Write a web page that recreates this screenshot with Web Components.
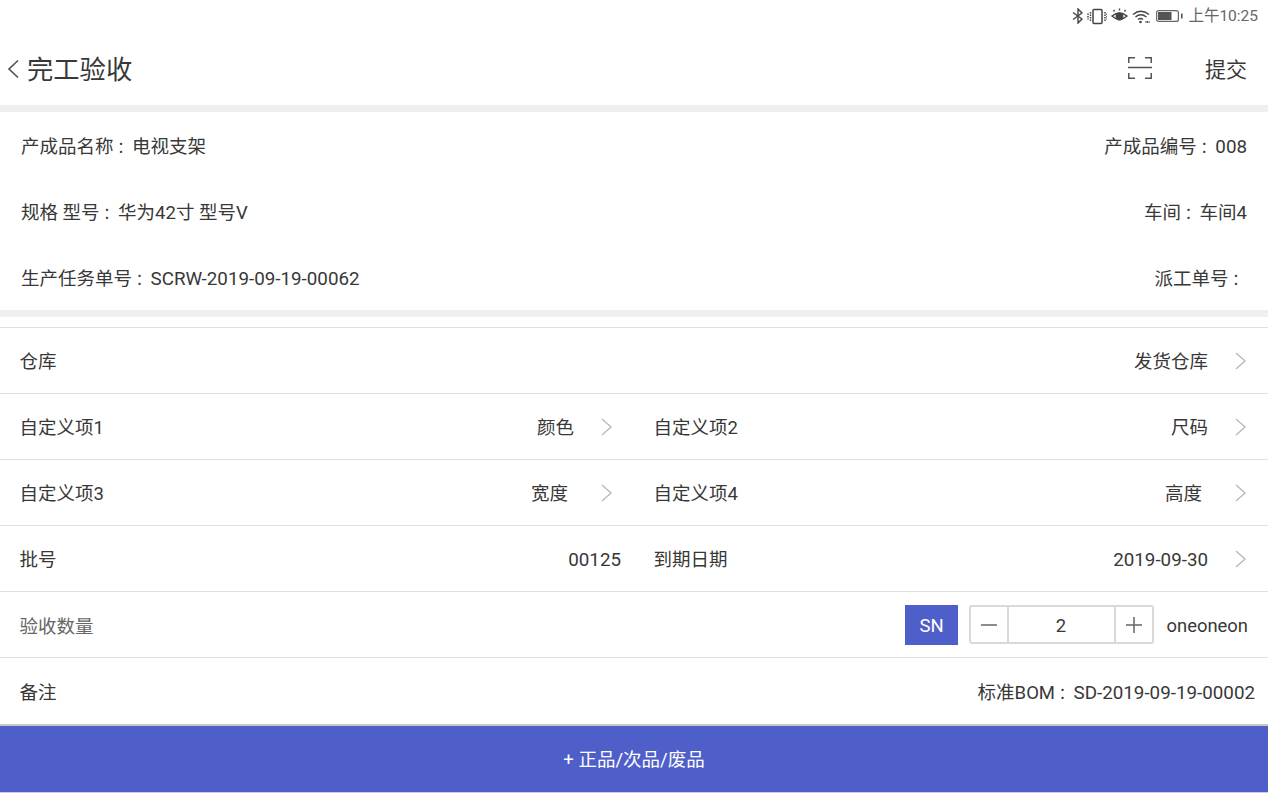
<!DOCTYPE html>
<html lang="zh-Hans"><head><meta charset="utf-8">
<style>
html,body{margin:0;padding:0;background:#fff;}
body{width:1268px;height:793px;overflow:hidden;font-family:Roboto,"Noto Sans CJK SC",sans-serif;color:#383838;font-size:18.5px;line-height:24px;display:flex;flex-direction:column;}
.c{font-family:"Noto Sans CJK TC",sans-serif;font-size:15px;line-height:0;margin-right:3.500px}
.l{font-size:18.8px;line-height:0}
</style></head><body>
<status-bar></status-bar>
<page-header></page-header>
<gray-band></gray-band>
<info-row><span>产成品名称<span class="c" lang="zh-Hant">：</span>电视支架</span><span slot="end">产成品编号<span class="c" lang="zh-Hant">：</span><span class="l">008</span></span></info-row>
<info-row><span>规格 型号<span class="c" lang="zh-Hant">：</span>华为42寸 型号V</span><span slot="end">车间<span class="c" lang="zh-Hant">：</span>车间4</span></info-row>
<info-row><span>生产任务单号<span class="c" lang="zh-Hant">：</span><span class="l">SCRW-2019-09-19-00062</span></span><span slot="end">派工单号<span class="c" lang="zh-Hant">：</span></span></info-row>
<gray-band></gray-band>
<form-list>
  <form-row>
    <form-cell label="仓库" chevron>发货仓库</form-cell>
  </form-row>
  <form-row>
    <form-cell half label="自定义项1" chevron>颜色</form-cell>
    <form-cell half label="自定义项2" chevron>尺码</form-cell>
  </form-row>
  <form-row>
    <form-cell half label="自定义项3" shift="6" chevron>宽度</form-cell>
    <form-cell half label="自定义项4" shift="6" chevron>高度</form-cell>
  </form-row>
  <form-row>
    <form-cell half label="批号" plain><span class="l">00125</span></form-cell>
    <form-cell half label="到期日期" chevron><span class="l">2019-09-30</span></form-cell>
  </form-row>
  <form-row>
    <qty-row></qty-row>
  </form-row>
  <form-row last>
    <form-cell label="备注" plain>标准BOM<span class="c" lang="zh-Hant">：</span><span class="l">SD-2019-09-19-00002</span></form-cell>
  </form-row>
</form-list>
<submit-bar>+ 正品/次品/废品</submit-bar>
<script>
function def(name, html, setup){
  customElements.define(name, class extends HTMLElement{
    constructor(){super();this.attachShadow({mode:'open'}).innerHTML=html;}
    connectedCallback(){ if(setup) setup(this); }
  });
}
def('status-bar',`<style>
:host{display:flex;height:33px;box-sizing:border-box;justify-content:flex-end;align-items:center;padding:0 10px 1px 0;color:#666;font-size:15.5px;}
svg{display:block;flex:none}
.t{margin-left:5px;white-space:nowrap}
</style>
<svg width="12" height="16" viewBox="0 0 12 16" fill="none" stroke="#444" stroke-width="1.400"><path d="M1 4.500l9 6.500-4 4V1l4 4-9 6.500"/></svg>
<svg width="20" height="17" viewBox="0 0 20 17" fill="none" stroke="#444" stroke-width="1.500" style="margin-left:3px"><rect x="6" y="1.500" width="9" height="14" rx="1"/><path d="M3.500 4v9M1 5.500v6M18 4v9M20 5.500v6" stroke-dasharray="1.500 1"/></svg>
<svg width="17" height="16" viewBox="0 0 17 16" fill="none" stroke="#444" stroke-width="1.400" style="margin-left:4px"><path d="M1 8Q8.500 2 16 8Q8.500 15 1 8Z"/><circle cx="8.500" cy="8.500" r="3.200" fill="#444"/><path d="M3.500 3.500L2.500 2M8.500 2.500V.5M13.500 3.500l1-1.500"/></svg>
<svg width="18" height="15" viewBox="0 0 18 15" fill="none" stroke="#444" stroke-width="1.400" style="margin-left:4px"><path d="M1 5.500Q8.500 -1 17 5.500M3.500 8Q8.500 3.500 14.500 8M6 10.500q2.500-2 5 0"/><circle cx="8.500" cy="13" r="1.300" fill="#444" stroke="none"/><path d="M13.500 13h4" stroke-width="2" stroke-dasharray="1 .6"/></svg>
<svg width="27" height="12" viewBox="0 0 27 12" fill="none" style="margin-left:6px"><rect x=".6" y=".6" width="21.800" height="10.800" rx="2" stroke="#666" stroke-width="1.200"/><rect x="2" y="2" width="13.500" height="8" fill="#555"/><rect x="25" y="3.500" width="1.600" height="5" fill="#555"/></svg>
<span class="t">上午10:25</span>`);
def('page-header',`<style>
:host{display:flex;align-items:center;height:72px;box-sizing:border-box;padding:0 21px 0 7px;}
.title{font-size:26.3px;line-height:30px;margin-left:7px;padding-top:2px;color:#383838}
.sp{flex:1}
.sub{font-size:21px;color:#383838;margin-left:53px;padding-top:2px}
svg{display:block;flex:none}
.back{margin-bottom:1px}
.scan{margin-bottom:2px}
</style>
<svg class="back" width="13" height="20" viewBox="0 0 13 20" fill="none" stroke="#555" stroke-width="1.700"><path d="M11 1.500L2 10l9 8.500"/></svg>
<span class="title">完工验收</span><span class="sp"></span>
<svg class="scan" width="24" height="22" viewBox="0 0 24 22" fill="none" stroke="#555" stroke-width="1.500"><path d="M.75 6V.75H7M17 .75h6.250V6M0 10.500h24M.75 16v5.250H7M17 21.250h6.250V16"/></svg>
<span class="sub">提交</span>`);
def('gray-band',`<style>:host{display:block;height:7px;background:#efefef;flex:none}</style>`);
def('info-row',`<style>
:host{display:flex;height:66px;box-sizing:border-box;justify-content:space-between;align-items:center;padding:4px 21px 0;flex:none;}
</style><slot></slot><slot name="end"></slot>`);
def('form-list',`<style>:host{display:block;padding-top:10px;flex:none;height:407px;box-sizing:border-box;}</style><slot></slot>`);
def('form-row',`<style>
:host{display:flex;height:66px;box-sizing:border-box;border-top:1px solid #e0e0e0;}
:host([last]){height:67px;}
</style><slot></slot>`);
def('form-cell',`<style>
:host{display:flex;flex:1;min-width:0;align-items:center;padding:3px 20px 0 19.500px;box-sizing:border-box;}
:host([half]){flex:0 0 634px;width:634px;}
:host([plain]){padding-right:13px;}
.sp{flex:1}
.chev{margin-left:26px;margin-top:-3px;display:none;flex:none}
:host([chevron]) .chev{display:block}
</style><span id="l"></span><span class="sp"></span><span id="v"><slot></slot></span>
<svg class="chev" width="14" height="18" viewBox="0 0 14 18" fill="none" stroke="#bbb" stroke-width="1.500"><path d="M2 1l9 8-9 8"/></svg>`,
el=>{const r=el.shadowRoot;r.getElementById('l').textContent=el.getAttribute('label');
 if(el.hasAttribute('shift'))r.getElementById('v').style.marginRight=el.getAttribute('shift')+'px';
 });
def('qty-row',`<style>
:host{display:flex;flex:1;align-items:center;padding:0 20px 0 19.500px;color:#666;}
.sp{flex:1}
.txt{padding-top:4px}
.sn{width:53px;height:40px;box-sizing:border-box;padding:3px 0 0 1px;background:#4f5fc9;color:#fff;display:flex;align-items:center;justify-content:center;}
.box{display:flex;margin-left:11px;height:39px;width:185px;box-sizing:border-box;border:2px solid #d9d9d9;border-radius:3px;color:#383838;}
.btn{width:36px;flex:none;display:flex;align-items:center;justify-content:center;}
.n{flex:1;display:flex;align-items:center;justify-content:center;padding-top:3px;border-left:2px solid #d9d9d9;border-right:2px solid #d9d9d9;}
.u{color:#383838;margin-left:13px;font-size:18.4px;padding-top:3px}
svg{display:block}
</style><span class="txt">验收数量</span><span class="sp"></span><span class="sn">SN</span>
<div class="box"><span class="btn"><svg width="16" height="16" fill="none" stroke="#666" stroke-width="1.500"><path d="M0 8h16"/></svg></span><span class="n">2</span><span class="btn"><svg width="16" height="16" fill="none" stroke="#666" stroke-width="1.500"><path d="M0 8h16M8 0v16"/></svg></span></div>
<span class="u">oneoneon</span>`);
def('submit-bar',`<style>
:host{display:flex;height:69px;box-sizing:border-box;flex:none;align-items:center;justify-content:center;padding-top:2px;background:#4f5fc9;color:#fff;border-top:2px solid #c9c9c9;border-bottom:1px solid #c9cde8;}
</style><slot></slot>`);
</script>
</body></html>
